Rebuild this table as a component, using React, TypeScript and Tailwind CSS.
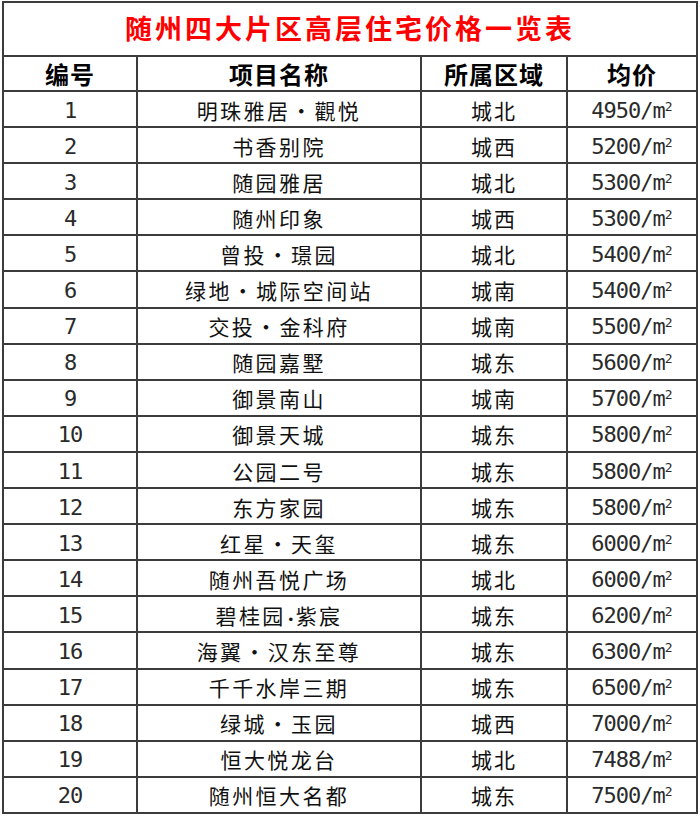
import React from "react";

const rows: [string, string, string][] = [
  ["明珠雅居·觀悦", "城北", "4950"],
  ["书香别院", "城西", "5200"],
  ["随园雅居", "城北", "5300"],
  ["随州印象", "城西", "5300"],
  ["曾投·璟园", "城北", "5400"],
  ["绿地·城际空间站", "城南", "5400"],
  ["交投·金科府", "城南", "5500"],
  ["随园嘉墅", "城东", "5600"],
  ["御景南山", "城南", "5700"],
  ["御景天城", "城东", "5800"],
  ["公园二号", "城东", "5800"],
  ["东方家园", "城东", "5800"],
  ["红星·天玺", "城东", "6000"],
  ["随州吾悦广场", "城北", "6000"],
  ["碧桂园•紫宸", "城东", "6200"],
  ["海翼·汉东至尊", "城东", "6300"],
  ["千千水岸三期", "城东", "6500"],
  ["绿城·玉园", "城西", "7000"],
  ["恒大悦龙台", "城北", "7488"],
  ["随州恒大名都", "城东", "7500"],
];

const cjk = { fontFamily: '"Noto Sans CJK SC", sans-serif' };
const mono = { fontFamily: '"DejaVu Sans Mono", monospace' };

function Name({ text }: { text: string }) {
  if (text.includes("·")) {
    const [a, b] = text.split("·");
    return (
      <span className="whitespace-nowrap">
        {a}
        <span className="inline-block w-[1.15em] text-center">·</span>
        {b}
      </span>
    );
  }
  if (text.includes("•")) {
    const [a, b] = text.split("•");
    return (
      <span className="whitespace-nowrap">
        {a}
        <span
          className="inline-block w-[10px] text-center text-[12px] tracking-normal"
          style={{ fontFamily: '"DejaVu Sans", sans-serif' }}
        >
          •
        </span>
        {b}
      </span>
    );
  }
  return <span className="whitespace-nowrap">{text}</span>;
}

export default function App() {
  return (
    <div className="w-[700px] h-[817px] bg-white">
      <div className="ml-[2px] mt-[1px] w-[696px] h-[813px] bg-[#3c3c3c] p-[2px] grid grid-cols-[132px_282px_144px_128px] grid-rows-[52px_33px_repeat(20,minmax(0,1fr))] gap-[2px]">
        <div
          className="col-span-4 bg-white flex items-center justify-center text-[#ff0000] font-bold text-[27px] tracking-[3px] pb-[2px]"
          style={cjk}
        >
          随州四大片区高层住宅价格一览表
        </div>
        {["编号", "项目名称", "所属区域", "均价"].map((h) => (
          <div
            key={h}
            className="bg-white flex items-center justify-center font-bold text-[24px] tracking-[1px] text-black leading-none"
            style={cjk}
          >
            {h}
          </div>
        ))}
        {rows.map(([name, area, price], i) => (
          <React.Fragment key={i}>
            <div
              className="bg-white flex items-center justify-center text-[22px] tracking-[-1px] text-[#2a2a2a] leading-none pt-[3px] overflow-hidden"
              style={mono}
            >
              {i + 1}
            </div>
            <div
              className="bg-white flex items-center justify-center text-[21px] tracking-[2.4px] text-[#111] leading-none pt-[2px] overflow-hidden"
              style={cjk}
            >
              <Name text={name} />
            </div>
            <div
              className="bg-white flex items-center justify-center text-[21px] tracking-[2px] text-[#111] leading-none pt-[2px] overflow-hidden"
              style={cjk}
            >
              {area}
            </div>
            <div
              className="bg-white flex items-center justify-center text-[22px] tracking-[-1px] text-[#2a2a2a] leading-none pt-[3px] overflow-hidden"
              style={mono}
            >
              <span className="whitespace-nowrap">
                {price}/m<span className="text-[13px] align-[7px] tracking-normal">2</span>
              </span>
            </div>
          </React.Fragment>
        ))}
      </div>
    </div>
  );
}
